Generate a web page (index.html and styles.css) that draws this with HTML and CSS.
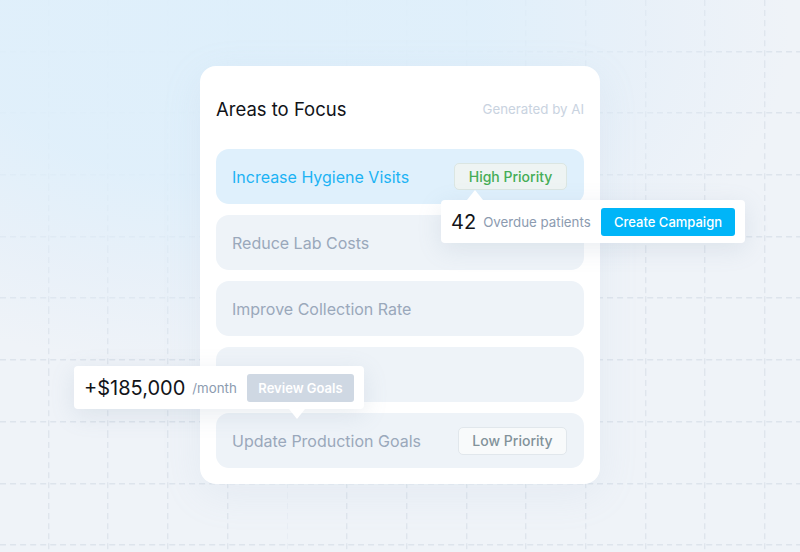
FILE: index.html
```html
<!DOCTYPE html>
<html>
<head>
<meta charset="utf-8">
<link rel="stylesheet" href="styles.css">
</head>
<body>
<div class="stage">
  <div class="glow"></div>
  <section class="card">
    <header class="card-head">
      <h2 class="title">Areas to Focus</h2>
      <span class="gen">Generated by AI</span>
    </header>
    <ul class="list">
      <li class="row row-active">
        <span class="row-label">Increase Hygiene Visits</span>
        <span class="badge badge-high">High Priority</span>
        <div class="tip tip-up">
          <span class="tip-num">42</span>
          <span class="tip-sub">Overdue patients</span>
          <span class="btn btn-cyan">Create Campaign</span>
        </div>
      </li>
      <li class="row"><span class="row-label">Reduce Lab Costs</span></li>
      <li class="row"><span class="row-label">Improve Collection Rate</span></li>
      <li class="row"></li>
      <li class="row">
        <span class="row-label">Update Production Goals</span>
        <span class="badge badge-low">Low Priority</span>
        <div class="tip tip-down">
          <span class="tip-num">+$185,000</span>
          <span class="tip-sub">/month</span>
          <span class="btn btn-gray">Review Goals</span>
        </div>
      </li>
    </ul>
  </section>
</div>
</body>
</html>
```
FILE: styles.css
```css
* { box-sizing: border-box; }
html, body { margin: 0; padding: 0; }
body {
  width: 800px;
  height: 552px;
  overflow: hidden;
  font-family: Inter, "Liberation Sans", sans-serif;
  background-color: #eff3f8;
}
.stage {
  position: relative;
  width: 800px;
  height: 552px;
  padding: 66px 0 0 200px;
  background-color: #eff3f8;
  background-image: url("data:image/svg+xml,%3Csvg xmlns='http://www.w3.org/2000/svg' width='59.7' height='61.7'%3E%3Cpath d='M48.5 0V61.7' stroke='%23dde4ec' stroke-width='1.3' stroke-dasharray='6 4' fill='none'/%3E%3Cpath d='M0 51.5H59.7' stroke='%23dde4ec' stroke-width='1.3' stroke-dasharray='6 4' fill='none'/%3E%3C/svg%3E");
  background-position: 0 0;
}
.glow {
  position: absolute;
  inset: 0;
  background:
    radial-gradient(ellipse 560px 340px at 230px 30px, rgba(222,239,251,0.97) 0%, rgba(222,239,251,0.88) 45%, rgba(226,238,249,0.5) 75%, rgba(238,243,248,0) 100%);
  pointer-events: none;
}
.card {
  position: relative;
  width: 400px;
  height: 418px;
  background: #fff;
  border-radius: 16px;
  padding: 30px 16px 16px;
  box-shadow: 0 10px 40px rgba(160, 180, 205, 0.12);
}
.card-head {
  display: flex;
  justify-content: space-between;
  align-items: center;
  height: 25px;
  margin-bottom: 28px;
}
.title {
  margin: 0;
  font-size: 18.5px;
  font-weight: 400;
  color: #111318;
}
.gen {
  font-size: 13.3px;
  color: #c9d3df;
}
.list {
  list-style: none;
  margin: 0;
  padding: 0;
  display: flex;
  flex-direction: column;
  gap: 11px;
}
.row {
  position: relative;
  height: 55px;
  border-radius: 13px;
  background: #eef3f8;
  display: flex;
  align-items: center;
  justify-content: space-between;
  padding: 0 17px 0 16px;
}
.row-label {
  font-size: 16px;
  color: #9aa8bb;
}
.row-active { background: #dff0fc; }
.row-active .row-label { color: #1cb3f4; }
.badge {
  font-size: 14px;
  font-weight: 500;
  border-radius: 5px;
  height: 28px;
  display: flex;
  align-items: center;
  justify-content: center;
}
.badge-high {
  background: #eef4f3;
  border: 1px solid #dbe6e2;
  color: #45ad56;
  height: 27px;
  width: 113px;
}
.badge-low {
  background: #f8fafb;
  border: 1px solid #e1e7ec;
  color: #82929a;
  width: 109px;
}
.tip {
  position: absolute;
  z-index: 2;
  height: 43px;
  background: #fff;
  border-radius: 4px;
  display: flex;
  align-items: center;
  padding: 0 10px;
  box-shadow: 0 6px 24px rgba(120, 140, 170, 0.16);
}
.tip::before {
  content: "";
  position: absolute;
  width: 0;
  height: 0;
  border-left: 8px solid transparent;
  border-right: 8px solid transparent;
}
.tip-up {
  left: 225px;
  top: 51px;
  width: 304px;
}
.tip-up::before {
  top: -10px;
  left: 26px;
  border-bottom: 10px solid #fff;
}
.tip-down {
  left: -142px;
  top: -47px;
  width: 290px;
}
.tip-down::before {
  bottom: -10px;
  left: 215px;
  border-top: 10px solid #fff;
}
.tip-num {
  font-size: 20px;
  color: #121419;
  margin-right: 7px;
}
.tip-sub {
  font-size: 13.3px;
  color: #8c9bb0;
}
.btn {
  margin-left: auto;
  height: 28px;
  border-radius: 3px;
  color: #fff;
  font-size: 13px;
  font-weight: 500;
  display: flex;
  align-items: center;
  justify-content: center;
}
.btn-cyan {
  background: #00b5f8;
  width: 134px;
}
.btn-gray {
  background: #cfd8e3;
  width: 107px;
  font-weight: 600;
}
```
